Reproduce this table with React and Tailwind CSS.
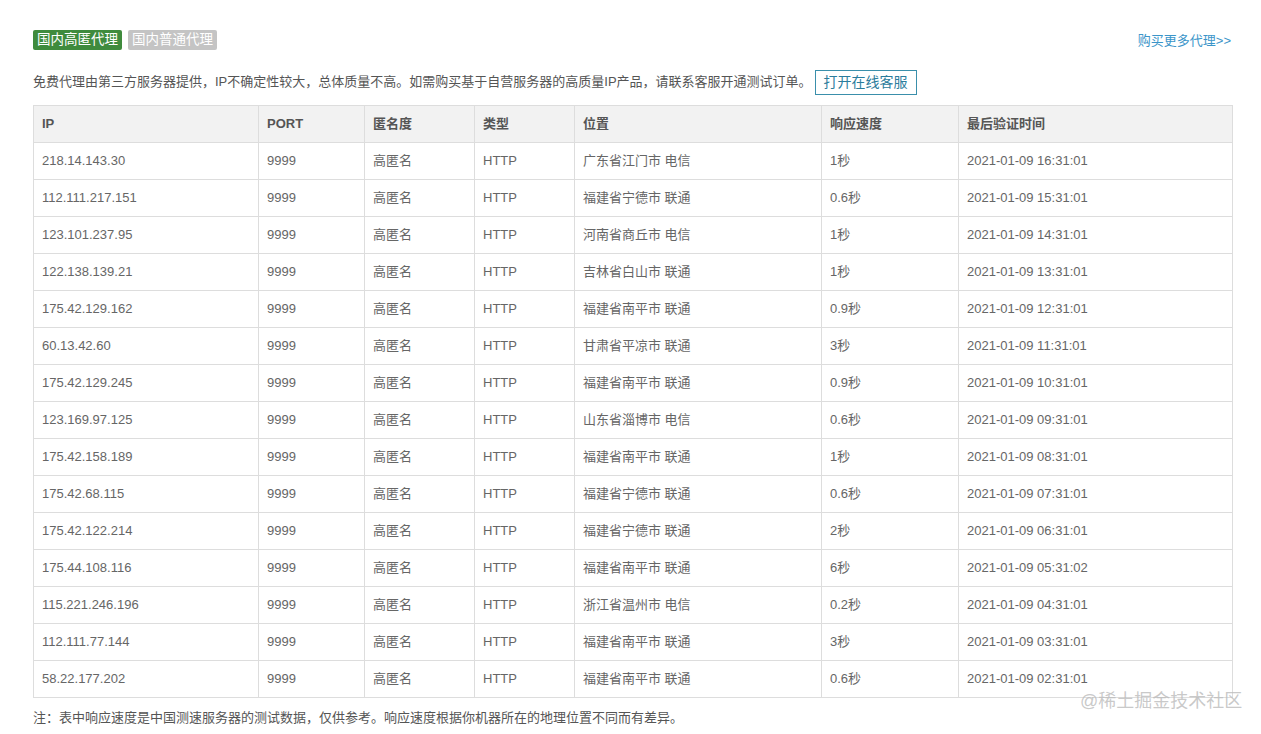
const rows = [
  ['218.14.143.30', '广东省江门市 电信', '1秒', '2021-01-09 16:31:01'],
  ['112.111.217.151', '福建省宁德市 联通', '0.6秒', '2021-01-09 15:31:01'],
  ['123.101.237.95', '河南省商丘市 电信', '1秒', '2021-01-09 14:31:01'],
  ['122.138.139.21', '吉林省白山市 联通', '1秒', '2021-01-09 13:31:01'],
  ['175.42.129.162', '福建省南平市 联通', '0.9秒', '2021-01-09 12:31:01'],
  ['60.13.42.60', '甘肃省平凉市 联通', '3秒', '2021-01-09 11:31:01'],
  ['175.42.129.245', '福建省南平市 联通', '0.9秒', '2021-01-09 10:31:01'],
  ['123.169.97.125', '山东省淄博市 电信', '0.6秒', '2021-01-09 09:31:01'],
  ['175.42.158.189', '福建省南平市 联通', '1秒', '2021-01-09 08:31:01'],
  ['175.42.68.115', '福建省宁德市 联通', '0.6秒', '2021-01-09 07:31:01'],
  ['175.42.122.214', '福建省宁德市 联通', '2秒', '2021-01-09 06:31:01'],
  ['175.44.108.116', '福建省南平市 联通', '6秒', '2021-01-09 05:31:02'],
  ['115.221.246.196', '浙江省温州市 电信', '0.2秒', '2021-01-09 04:31:01'],
  ['112.111.77.144', '福建省南平市 联通', '3秒', '2021-01-09 03:31:01'],
  ['58.22.177.202', '福建省南平市 联通', '0.6秒', '2021-01-09 02:31:01'],
]

const cols = [
  { label: 'IP', w: 'w-[225px]' },
  { label: 'PORT', w: 'w-[106px]' },
  { label: '匿名度', w: 'w-[110px]' },
  { label: '类型', w: 'w-[100px]' },
  { label: '位置', w: 'w-[247px]' },
  { label: '响应速度', w: 'w-[137px]' },
  { label: '最后验证时间', w: 'w-[274px]' },
]

export default function App() {
  return (
    <div
      className="relative w-[1261px] h-[734px] bg-white text-[13px] text-[#666]"
      style={{ fontFamily: '"Liberation Sans", "Noto Sans CJK SC", sans-serif' }}
    >
      <div className="pl-[33px] pr-[29px] pt-[30px]">
        {/* tabs */}
        <div className="flex items-center justify-between h-[20px]">
          <div className="flex gap-[6px]">
            <span className="h-[20px] px-[4px] leading-[20px] text-[13.5px] rounded-[2px] bg-[#3f8b3d] text-white">国内高匿代理</span>
            <span className="h-[20px] px-[4px] leading-[20px] text-[13.5px] rounded-[2px] bg-[#c4c4c4] text-white">国内普通代理</span>
          </div>
          <a className="text-[#3b95c9] mt-[2px] mr-[1px]">购买更多代理&gt;&gt;</a>
        </div>

        {/* notice */}
        <div className="flex items-center mt-[20px] h-[24px]">
          <span className="text-[#555]">免费代理由第三方服务器提供，IP不确定性较大，总体质量不高。如需购买基于自营服务器的高质量IP产品，请联系客服开通测试订单。</span>
          <span className="ml-[3px] h-[25px] px-[8px] leading-[23px] border border-[#3a8fab] text-[#2b7c9c] text-[14px]">打开在线客服</span>
        </div>

        {/* table */}
        <table className="mt-[11px] w-[1199px] table-fixed border-collapse">
          <thead>
            <tr className="bg-[#f2f2f2]">
              {cols.map((c) => (
                <th
                  key={c.label}
                  className={`${c.w} h-[37px] border border-[#dddddd] px-[8px] text-left font-semibold text-[#555]`}
                >
                  {c.label}
                </th>
              ))}
            </tr>
          </thead>
          <tbody>
            {rows.map((r) => (
              <tr key={r[0] + r[3]}>
                <td className="h-[37px] border border-[#dddddd] px-[8px]">{r[0]}</td>
                <td className="h-[37px] border border-[#dddddd] px-[8px]">9999</td>
                <td className="h-[37px] border border-[#dddddd] px-[8px]">高匿名</td>
                <td className="h-[37px] border border-[#dddddd] px-[8px]">HTTP</td>
                <td className="h-[37px] border border-[#dddddd] px-[8px]">{r[1]}</td>
                <td className="h-[37px] border border-[#dddddd] px-[8px]">{r[2]}</td>
                <td className="h-[37px] border border-[#dddddd] px-[8px]">{r[3]}</td>
              </tr>
            ))}
          </tbody>
        </table>

        <p className="mt-[10px] text-[#555]">注：表中响应速度是中国测速服务器的测试数据，仅供参考。响应速度根据你机器所在的地理位置不同而有差异。</p>
      </div>

      {/* watermark */}
      <span className="absolute left-[1080px] top-[688px] text-[18px] text-[#bbbbbb]/80">@稀土掘金技术社区</span>
    </div>
  )
}
